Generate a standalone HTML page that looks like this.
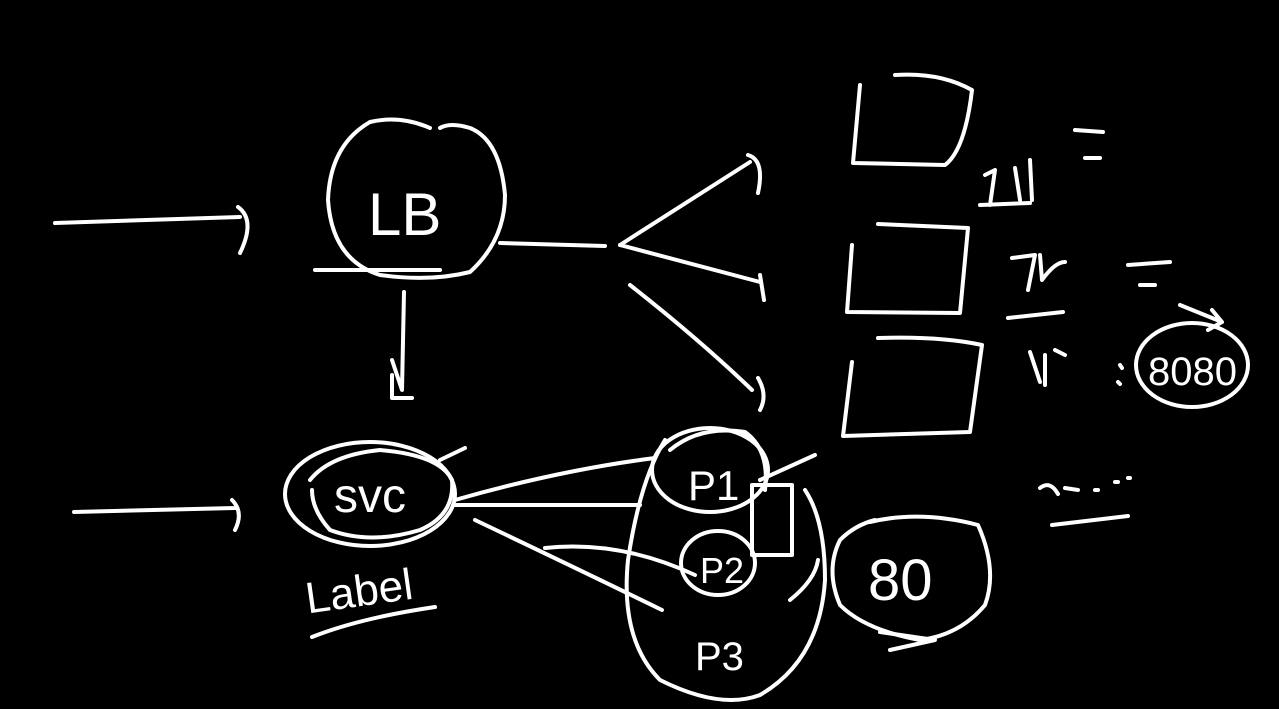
<!DOCTYPE html>
<html><head><meta charset="utf-8"><style>
html,body{margin:0;padding:0;background:#000;width:1279px;height:709px;overflow:hidden}
svg{display:block}
</style></head><body>
<svg width="1279" height="709" viewBox="0 0 1279 709" xmlns="http://www.w3.org/2000/svg">
<rect width="1279" height="709" fill="#000"/>
<g fill="none" stroke="#fff" stroke-width="4" stroke-linecap="round" stroke-linejoin="round">
<path d="M55 223 L240 217 M238 207 Q256 220 240 253"/>
<path d="M430 128 Q400 115 370 122 Q330 145 328 200 Q332 260 380 275 Q430 282 470 272 Q505 240 505 195 Q500 140 470 128 Q450 122 440 128"/>
<path d="M315 270 L440 270"/>
<path d="M500 243 L605 246"/>
<path d="M620 245 L750 162 M748 155 Q765 160 758 193"/>
<path d="M620 245 L760 282 M760 275 L764 300"/>
<path d="M630 285 Q700 340 752 390 M758 378 Q768 395 760 410"/>
<path d="M404 292 L402 390 L392 360 M392 375 L392 398 L412 398"/>
<path d="M860 85 L853 163 L945 165 Q965 150 972 90 Q940 72 895 75"/>
<path d="M852 245 L847 312 L960 313 L968 228 L878 224"/>
<path d="M852 362 L843 436 L970 432 L982 345 Q940 336 878 338"/>
<path d="M1075 130 L1103 132 M1085 158 L1100 158"/>
<path d="M1128 265 L1170 262 M1140 285 L1155 285"/>
<path d="M980 205 L1030 203 M985 175 L995 170 L990 205 M1015 168 L1020 200 M1030 160 L1032 200"/>
<path d="M1008 318 L1063 312 M1012 258 L1035 255 L1028 290 M1040 255 L1042 280 Q1055 262 1065 262"/>
<path d="M1030 352 L1040 382 M1045 355 L1045 385 M1055 350 L1065 355 M1120 365 L1122 368 M1118 382 L1120 384"/>
<path d="M1180 305 L1222 322 L1212 310 M1222 322 L1208 330"/>
<ellipse cx="1192" cy="365" rx="56" ry="42"/>
<path d="M1040 488 Q1050 480 1058 494 M1065 488 L1078 490 M1095 490 L1098 490 M1115 482 L1118 482 M1128 478 L1130 478 M1052 525 L1128 516"/>
<path d="M74 512 L235 508 M232 500 Q244 512 235 530"/>
<ellipse cx="370" cy="494" rx="85" ry="52"/>
<path d="M310 480 Q330 455 380 450 Q440 455 452 480 Q455 515 420 530 Q370 545 330 530 Q312 510 312 490"/>
<path d="M440 460 L465 448"/>
<path d="M312 637 Q360 618 435 607"/>
<path d="M455 500 Q560 470 655 458"/>
<path d="M455 505 L640 505"/>
<path d="M475 520 Q580 570 662 610"/>
<path d="M545 548 Q620 540 695 575"/>
<path d="M665 440 Q640 480 628 560 Q620 640 660 680 Q720 710 760 695 Q820 660 825 580 Q825 520 805 490"/>
<ellipse cx="710" cy="470" rx="58" ry="42"/>
<path d="M670 450 Q700 425 745 432 Q770 450 765 490"/>
<path d="M760 480 L815 455"/>
<rect x="752" y="485" width="40" height="70"/>
<ellipse cx="718" cy="563" rx="37" ry="32"/>
<path d="M790 600 Q815 580 818 560"/>
<path d="M870 522 Q920 510 978 525 Q998 570 985 605 Q960 635 920 640 Q865 630 840 605 Q825 570 840 540 Q855 525 875 520"/>
<path d="M880 632 L935 640 L890 650"/>
</g>
<g fill="#fff" font-family="Liberation Sans, sans-serif">
<text x="368" y="235" font-size="60">LB</text>
<text x="334" y="512" font-size="48">svc</text>
<text x="305" y="606" font-size="44" transform="rotate(-8 360 590)">Label</text>
<text x="1148" y="385" font-size="40">8080</text>
<text x="868" y="600" font-size="58">80</text>
<text x="688" y="500" font-size="42">P1</text>
<text x="700" y="583" font-size="36">P2</text>
<text x="695" y="670" font-size="40">P3</text>
</g>
</svg>
</body></html>
